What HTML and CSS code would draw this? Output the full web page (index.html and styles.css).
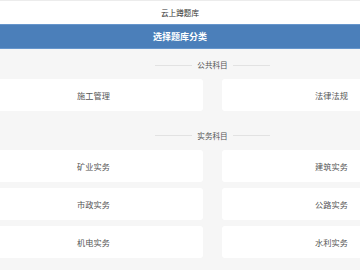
FILE: index.html
```html
<!DOCTYPE html>
<html lang="zh-CN">
<head>
<meta charset="utf-8">
<title>云上蹲题库</title>
<link rel="stylesheet" href="styles.css">
</head>
<body>
<header class="topbar">云上蹲题库</header>
<div class="banner">选择题库分类</div>
<main class="content">
  <section class="group group-first">
    <div class="group-title"><span class="line"></span><span class="label">公共科目</span><span class="line"></span></div>
    <div class="cards">
      <div class="card">施工管理</div>
      <div class="card">法律法规</div>
    </div>
  </section>
  <section class="group">
    <div class="group-title"><span class="line"></span><span class="label">实务科目</span><span class="line"></span></div>
    <div class="cards">
      <div class="card">矿业实务</div>
      <div class="card">建筑实务</div>
      <div class="card">市政实务</div>
      <div class="card">公路实务</div>
      <div class="card">机电实务</div>
      <div class="card">水利实务</div>
    </div>
  </section>
</main>
</body>
</html>
```
FILE: styles.css
```css
html, body {
  margin: 0;
  padding: 0;
  height: 100%;
  overflow: hidden;
}
body {
  background: #f6f6f6;
  font-family: "Noto Sans CJK SC", "Noto Sans", sans-serif;
  width: 360px;
}
.topbar {
  height: 23px;
  border-top: 1px solid #ececec;
  background: #ffffff;
  color: #333333;
  font-size: 7.6px;
  line-height: 23px;
  text-align: center;
}
.banner {
  height: 23px;
  border-top: 1px solid #6796cc;
  border-bottom: 1px solid #6796cc;
  background: #4b7fba;
  color: #ffffff;
  font-size: 9px;
  font-weight: bold;
  line-height: 23px;
  text-align: center;
}
.content {
  width: 457px;
  margin-left: -16px;
  padding-top: 2px;
}
.group {
  margin-top: 10.5px;
}
.group-first {
  margin-top: 0;
}
.group-title {
  height: 28px;
  display: flex;
  align-items: center;
  justify-content: center;
  gap: 5px;
}
.line {
  width: 37px;
  height: 1px;
  background: #e2e2e2;
}
.label {
  font-size: 7.6px;
  color: #555555;
  line-height: 10px;
}
.cards {
  display: grid;
  grid-template-columns: 1fr 1fr;
  column-gap: 19px;
  row-gap: 6px;
}
.card {
  height: 32px;
  background: #ffffff;
  border-radius: 3px;
  display: flex;
  align-items: center;
  justify-content: center;
  font-size: 8.2px;
  color: #555555;
}
```
